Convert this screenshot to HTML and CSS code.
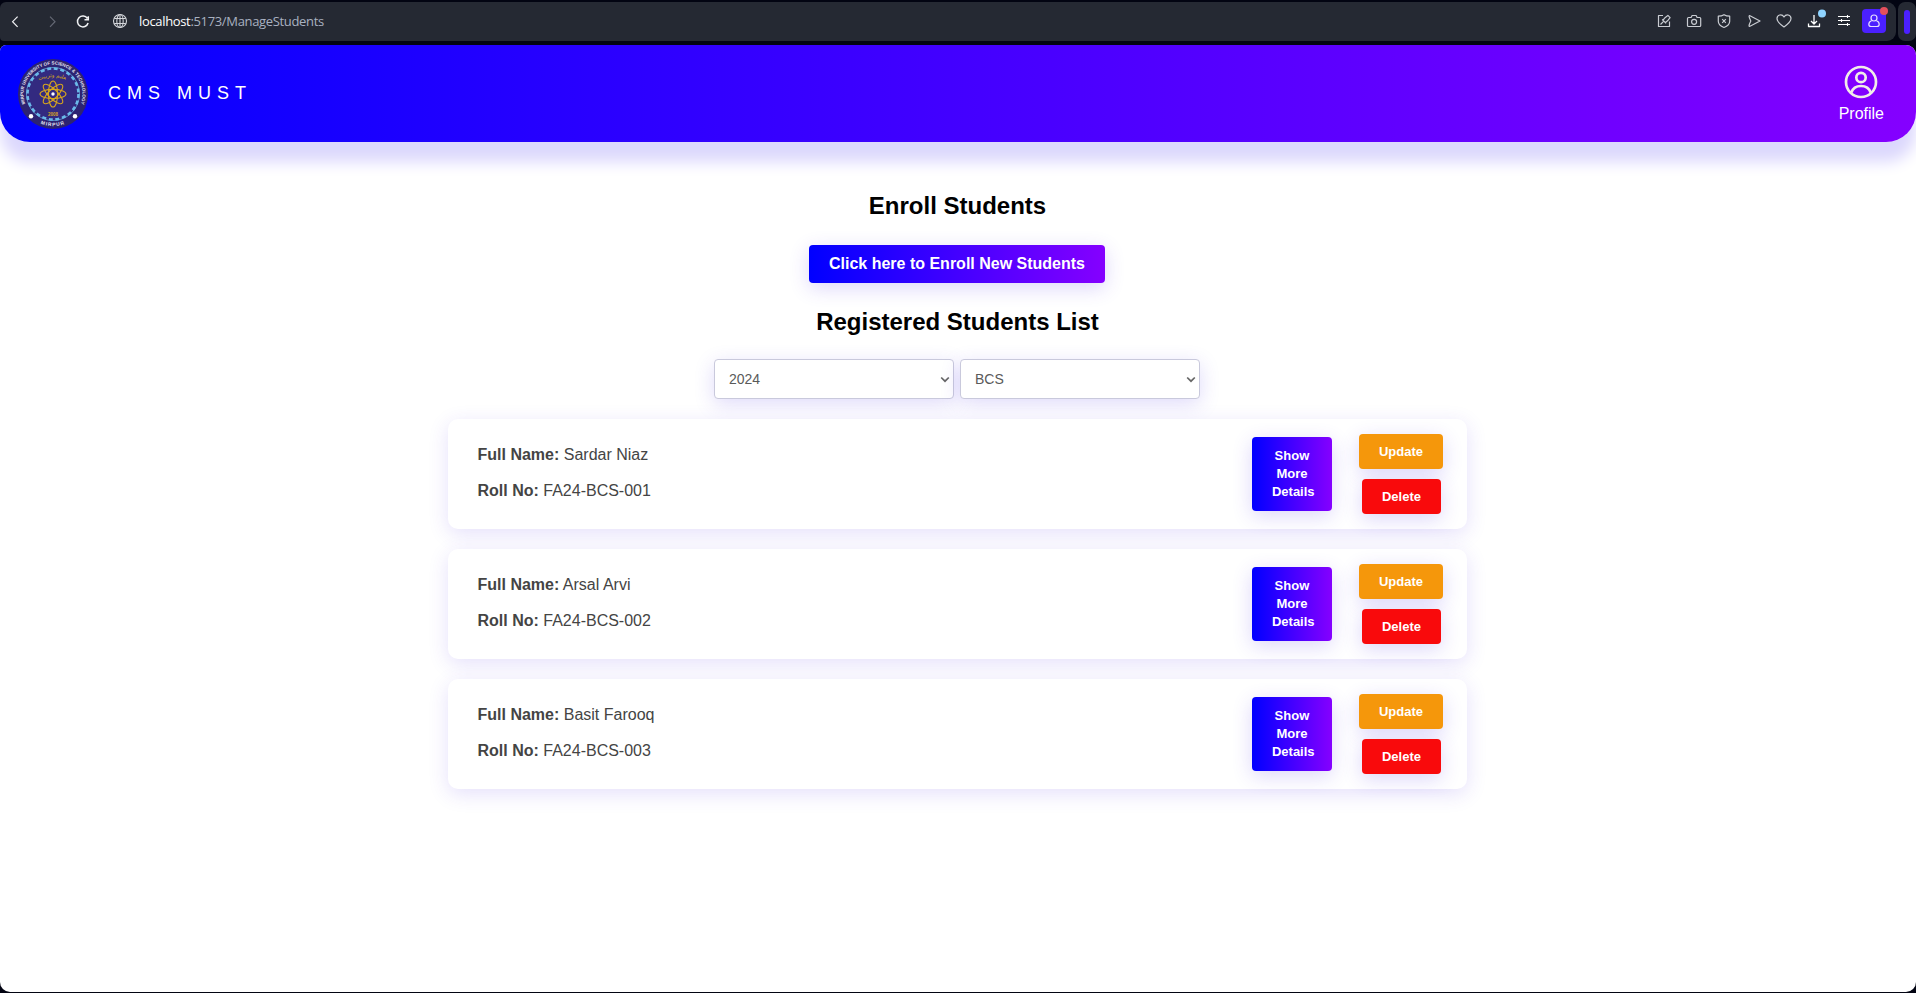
FILE: index.html
```html
<!DOCTYPE html>
<html lang="en">
<head>
<meta charset="utf-8">
<title>Manage Students</title>
<link rel="stylesheet" href="styles.css">
</head>
<body>
<div class="browser">
  <div class="chrome">
    <div class="toolbar">
      <svg class="nav-icons" width="140" height="39" viewBox="0 2 140 39" fill="none" stroke="#f1f2f5" stroke-width="1.2">
        <path d="M17.6 16.6 12.6 21.7l5 5.1"/>
        <path d="M50 16.6 55 21.7l-5 5.1" stroke="#656975"/>
        <path d="M87.4 18.5A5.4 5.4 0 1 0 88.1 23M88.3 16.2v3.6h-3.8" stroke-width="1.5"/>
        <g stroke="#d3d5da" stroke-width="1.1"><circle cx="120" cy="21" r="6.5"/><ellipse cx="120" cy="21" rx="3.2" ry="6.5"/><path d="M120 14.500v13M114.300 18.500h11.400M114.300 23.500h11.400"/></g>
      </svg>
      <div class="url"><span class="host">localhost</span>:5173/ManageStudents</div>
      <svg class="tools" width="250" height="39" viewBox="1646 2 250 39" fill="none" stroke="#c9ccd2" stroke-width="1.2" stroke-linejoin="round">
        <path d="M1663 15.500h-4.500v11h11v-5M1660.500 24.500l3.300-3.300M1662.200 19.500l3.900 3.900M1663 20.200l2.300-2.800 2.600-2 2.200 2.200-2 2.600-2.600 2.300"/>
        <path d="M1688.500 17.500h2.600l1-2h4l1 2h2.600q1 0 1 1v7q0 1-1 1h-11.200q-1 0-1-1v-7q0-1 1-1z"/><circle cx="1694.100" cy="21.800" r="2.500"/>
        <path d="M1724 14.700c2 1.300 3.500 1.500 5.700 1.500v5c0 3.200-2.300 5-5.700 6.300-3.400-1.300-5.700-3.100-5.700-6.300v-5c2.200 0 3.700-.2 5.700-1.500zM1722.200 19.200l3.600 3.600M1725.800 19.200l-3.600 3.600"/>
        <path d="M1749.500 15.500l10.500 5.500-10.500 5.500c-.8-.3-.8-1 1.300-5.500-2-4.500-2.100-5.200-1.300-5.500z"/>
        <path d="M1784 27c-5-3.500-7-5.500-7-8.400 0-4 5-5 7-1.600 2-3.400 7-2.400 7 1.600 0 2.900-2 4.900-7 8.400z"/>
        <g stroke="#fff"><path d="M1814 15v9M1811 21l3 3 3-3M1808.500 23.500v3h11v-3" stroke-width="1.300"/><path d="M1838 16.500h12M1838 20.500h12M1838 24.500h12M1847.500 15v3M1841.500 19v3M1847.500 23v3" stroke-width="1.100"/></g>
        <circle cx="1822" cy="13.500" r="4" fill="#8fd3ff" stroke="none"/>
        <rect x="1862" y="9" width="24" height="24" rx="4" fill="#4b20ff" stroke="none"/>
        <g stroke="#e6e0ff"><circle cx="1874" cy="18" r="3"/><path d="M1871.500 20.800c-2 .8-2.700 2-2.700 3.400 0 1.700.9 2.300 2.400 2.300h5.600c1.500 0 2.400-.6 2.400-2.300 0-1.400-.7-2.600-2.700-3.400"/></g>
        <circle cx="1884" cy="11" r="4" fill="#e4505c" stroke="none"/>
      </svg>
    </div>
    <div class="side-tab"><span class="side-mark"></span></div>
  </div>
  <div class="page">
    <header class="site-header">
      <svg class="logo" width="70" height="70" viewBox="-35 -35 70 70">
        <defs>
          <path id="ring-top" d="M-24.500 16.500A29.500 29.500 0 1 1 24.500 16.500"/>
          <path id="ring-bottom" d="M-18 26.700A32.200 32.200 0 0 0 18 26.700"/>
          <path id="motto" d="M-13-14Q0-20 13-14"/>
        </defs>
        <circle r="35" fill="#2d2372"/>
        <circle r="25.500" fill="#332a80" stroke="#6ab9e9" stroke-width="2.600" stroke-dasharray="4 2.676"/>
        <circle r="26.500" fill="none" stroke="#6ab9e9" stroke-width=".7"/>
        <text class="ring-text" font-size="4.500"><textPath href="#ring-top" startOffset="50%" text-anchor="middle">MIRPUR UNIVERSITY OF SCIENCE &amp; TECHNOLOGY</textPath></text>
        <text class="ring-text" font-size="4.900" letter-spacing="1" text-anchor="middle"><textPath href="#ring-bottom" startOffset="50%">MIRPUR</textPath></text>
        <text class="motto" font-size="5.500" text-anchor="middle"><textPath href="#motto" startOffset="50%">تعليم وتربيت</textPath></text>
        <g fill="none" stroke="#d6a51d" stroke-width="1.100"><ellipse rx="13" ry="4.600"/><ellipse rx="13" ry="4.600" transform="rotate(45)"/><ellipse rx="13" ry="4.600" transform="rotate(90)"/><ellipse rx="13" ry="4.600" transform="rotate(135)"/></g>
        <circle r="1.700" fill="#fff"/>
        <text class="year" x="0" y="21.500" text-anchor="middle" font-size="4.500">2008</text>
        <circle cx="-22" cy="22.300" r="2.200" fill="#fff"/><circle cx="22" cy="22.300" r="2.200" fill="#fff"/>
      </svg>
      <div class="brand">CMS MUST</div>
      <div class="profile">
        <svg width="34" height="34" viewBox="0 0 34 34" fill="none" stroke="#f1ece9" stroke-width="2.700"><circle cx="17" cy="17" r="15"/><circle cx="17" cy="12.500" r="4.700"/><path d="M7.300 27.500c1.500-4.300 5.200-6.500 9.700-6.500s8.200 2.200 9.700 6.500"/></svg>
        <span>Profile</span>
      </div>
    </header>
    <main class="content">
      <h2 class="title">Enroll Students</h2>
      <button class="btn enroll">Click here to Enroll New Students</button>
      <h2 class="title list-title">Registered Students List</h2>
      <div class="filters">
        <div class="select">2024<svg width="10" height="7" viewBox="0 0 10 7"><path d="M1.200 1.500 5 5.200l3.800-3.700"/></svg></div>
        <div class="select">BCS<svg width="10" height="7" viewBox="0 0 10 7"><path d="M1.200 1.500 5 5.200l3.800-3.700"/></svg></div>
      </div>
      <section class="students">
        <article class="card">
          <div class="info"><p><b>Full Name:</b> Sardar Niaz</p><p><b>Roll No:</b> FA24-BCS-001</p></div>
          <button class="btn more">Show More Details</button>
          <div class="actions"><button class="btn update">Update</button><button class="btn delete">Delete</button></div>
        </article>
        <article class="card">
          <div class="info"><p><b>Full Name:</b> Arsal Arvi</p><p><b>Roll No:</b> FA24-BCS-002</p></div>
          <button class="btn more">Show More Details</button>
          <div class="actions"><button class="btn update">Update</button><button class="btn delete">Delete</button></div>
        </article>
        <article class="card">
          <div class="info"><p><b>Full Name:</b> Basit Farooq</p><p><b>Roll No:</b> FA24-BCS-003</p></div>
          <button class="btn more">Show More Details</button>
          <div class="actions"><button class="btn update">Update</button><button class="btn delete">Delete</button></div>
        </article>
      </section>
    </main>
  </div>
</div>
</body>
</html>
```
FILE: styles.css
```css
* { box-sizing: border-box; }
body { margin: 0; background: #020412; font-family: "Liberation Sans", Arial, sans-serif; }
.browser { height: 993px; display: flex; flex-direction: column; overflow: hidden; }
.chrome { height: 45px; padding: 2px 0 4px; display: flex; gap: 2px; flex: none; }
.toolbar { width: 1896px; display: flex; align-items: center; background: #252933; border-radius: 6px 9px 9px 4px; }
.nav-icons, .tools { flex: none; display: block; }
.url { flex: 1; font: 13px/20px "Open Sans", "Noto Sans", sans-serif; color: #a9b1c0; letter-spacing: -0.34px; margin: -2px 0 0 -1px; }
.host { color: #fff; }
.side-tab { width: 18px; background: #252933; border-radius: 7px; display: flex; align-items: center; justify-content: center; }
.side-mark { width: 6px; height: 24px; border-radius: 3px; background: #4b20ff; }
.page { height: 947px; flex: none; background: #fff; border-radius: 6px 10px 10px 10px; overflow: hidden; }
.site-header { height: 97px; display: flex; align-items: center; padding: 0 32px 0 18px; color: #fff; background: linear-gradient(to right, #00f, #8500ff); border-radius: 0 0 30px 30px; box-shadow: 0 20px 15px #dcd8fd; }
.logo { display: block; margin-top: 1px; }
.ring-text { fill: #e4e3ef; font-weight: bold; }
.motto { fill: #d6a51d; font-family: "DejaVu Sans", sans-serif; }
.year { fill: #d6a51d; font-weight: bold; }
.brand { margin: -2px auto 0 20px; font-size: 18px; line-height: 22px; letter-spacing: 6px; }
.profile { display: flex; flex-direction: column; align-items: center; font-size: 16px; line-height: 20px; gap: 5px; padding-top: 1px; }
.profile svg { display: block; }
.content { width: 1915px; padding-top: 49px; display: flex; flex-direction: column; align-items: center; }
.title { margin: 0; font-size: 24px; line-height: 30px; color: #000; }
.btn { border: 0; border-radius: 4px; padding: 10px 20px; color: #fff; font: bold 13px/15px "Liberation Sans", Arial, sans-serif; box-shadow: 0 5px 20px rgba(80, 50, 230, .2); }
.enroll { width: 296px; height: 38px; margin: 24px 1px 0 0; padding: 10px 0; font-size: 16px; line-height: 18px; background: linear-gradient(to right, #00f, #8500ff); }
.list-title { margin-top: 24px; }
.filters { display: flex; gap: 6px; margin: 22px 1px 0 0; }
.select { width: 240px; height: 40px; border: 1px solid #c9c9dc; border-radius: 4px; background: #fff; padding: 0 3px 0 14px; display: flex; align-items: center; justify-content: space-between; font-size: 14px; color: #5a5a5a; box-shadow: 0 5px 20px rgba(80, 50, 230, .18); }
.select svg { fill: none; stroke: #666; stroke-width: 1.7; }
.students { margin-top: 20px; width: 1019px; display: grid; gap: 20px; }
.card { height: 110px; display: flex; align-items: center; padding: 0 24px 0 29.5px; background: #fff; border-radius: 10px; box-shadow: 0 5px 20px rgba(80, 50, 230, .15); }
.info { flex: 1; align-self: flex-start; padding-top: 27px; font-size: 16px; color: #444; }
.info p { margin: 0 0 18px; line-height: 18px; }
.more { width: 80px; height: 74px; margin-right: 27px; line-height: 18px; background: linear-gradient(to right, #00f, #8500ff); }
.actions { display: flex; flex-direction: column; align-items: center; gap: 10px; }
.update { background: #f5970b; }
.delete { margin-left: 1px; background: #f90a0c; }
```
